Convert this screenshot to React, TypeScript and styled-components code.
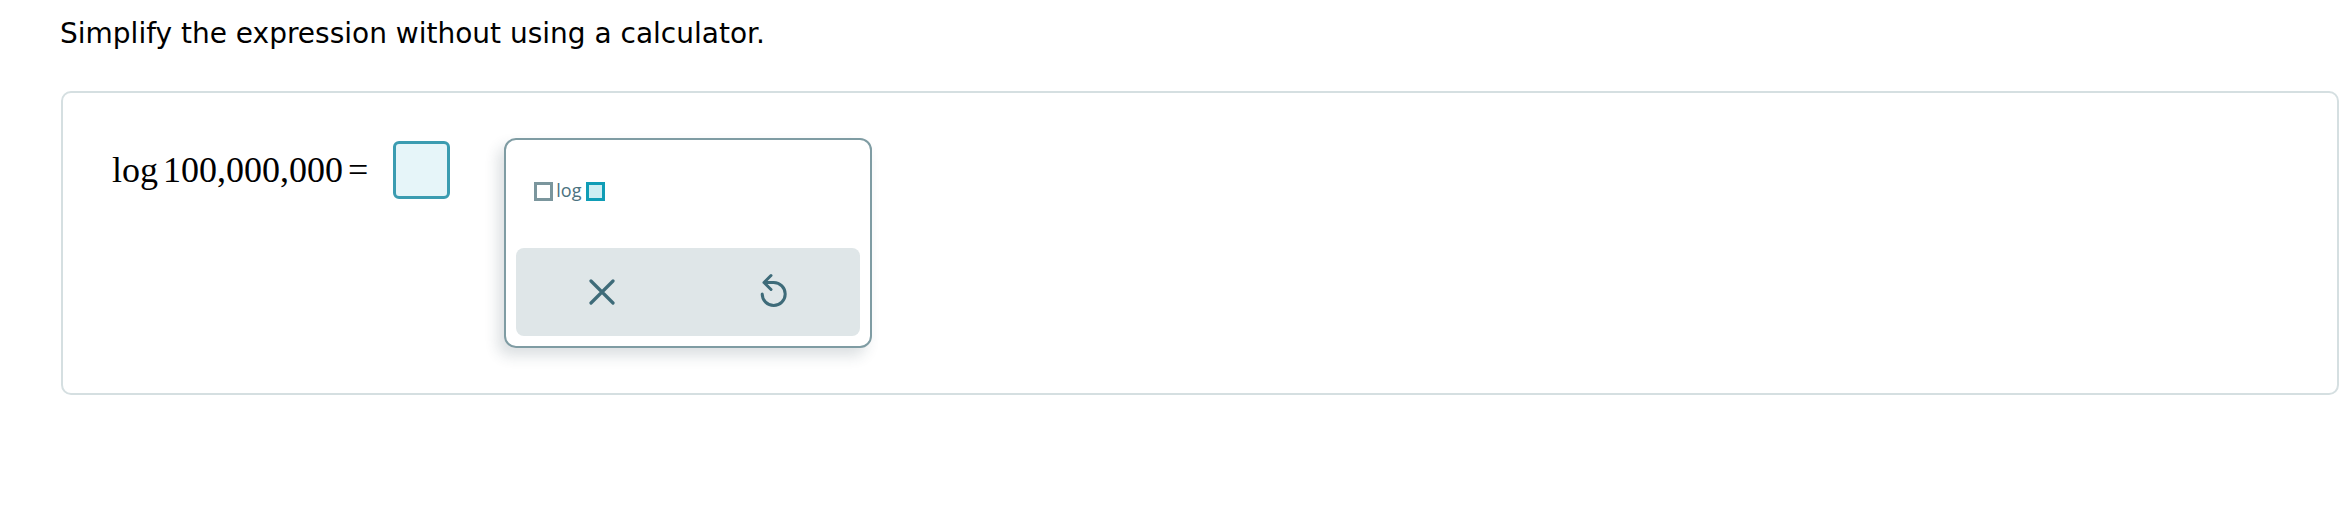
import React from 'react';
import styled, { createGlobalStyle } from 'styled-components';

const GlobalStyle = createGlobalStyle`
  html,
  body {
    margin: 0;
    padding: 0;
    background: #fff;
  }
`;

const Page = styled.div`
  padding: 0 11px 0 61px;
  box-sizing: border-box;
  width: 2350px;
`;

const Prompt = styled.p`
  margin: 16px 0 0 -1px;
  font-family: 'DejaVu Sans', Verdana, sans-serif;
  font-size: 28px;
  line-height: 36px;
  color: #000;
`;

const Card = styled.div`
  margin-top: 39px;
  height: 304px;
  box-sizing: border-box;
  border: 2px solid #d5dfe1;
  border-radius: 10px;
  padding: 45px 0 0 49px;
`;

const Row = styled.div`
  display: flex;
  align-items: flex-start;
`;

const Expression = styled.div`
  display: flex;
  align-items: center;
  margin-top: 3px;
  font-family: 'Liberation Serif', 'Times New Roman', serif;
  font-size: 36px;
  color: #000;
  white-space: nowrap;
`;

const Term = styled.span<{ $gap?: number }>`
  margin-left: ${(p) => p.$gap ?? 0}px;
  line-height: 1;
`;

const AnswerBox = styled.div`
  width: 57px;
  height: 58px;
  margin-left: 25px;
  box-sizing: border-box;
  border: 3px solid #3b9cb1;
  border-radius: 6px;
  background: #e6f5f9;
`;

const Keypad = styled.div`
  margin-left: 54px;
  width: 368px;
  height: 210px;
  box-sizing: border-box;
  border: 2px solid #7f9ca3;
  border-radius: 12px;
  padding: 10px;
  background: #fff;
  box-shadow: -6px 8px 14px rgba(40, 64, 74, 0.16);
  display: flex;
  flex-direction: column;
`;

const TemplateArea = styled.div`
  flex: 1;
  padding: 32px 0 0 18px;
`;

const TemplateButton = styled.div`
  display: inline-flex;
  align-items: center;
  height: 19px;
`;

const Slot = styled.span<{ $active?: boolean }>`
  display: block;
  width: 19px;
  height: 19px;
  box-sizing: border-box;
  border: 3px solid ${(p) => (p.$active ? '#0f9db6' : '#7b969d')};
  background: ${(p) => (p.$active ? '#cdeef3' : '#fff')};
`;

const FnLabel = styled.span`
  margin: 0 5px 0 3px;
  font-family: 'Open Sans', 'Liberation Sans', sans-serif;
  font-size: 18px;
  line-height: 19px;
  color: #4b7280;
  position: relative;
  top: -1px;
`;

const ActionBar = styled.div`
  display: grid;
  grid-template-columns: 1fr 1fr;
  height: 88px;
  border-radius: 8px;
  background: #dfe6e8;
`;

const ActionButton = styled.button`
  display: flex;
  align-items: center;
  justify-content: center;
  border: none;
  background: transparent;
  padding: 0;
  cursor: pointer;
  color: #3e6b79;
`;

const ClearIcon = () => (
  <svg width="26" height="26" viewBox="0 0 26 26" fill="none">
    <path
      d="M2 2 L24 24 M24 2 L2 24"
      stroke="currentColor"
      strokeWidth="3.2"
      strokeLinecap="round"
    />
  </svg>
);

const UndoIcon = () => (
  <svg width="30" height="36" viewBox="0 0 30 36" fill="none" style={{ marginTop: -2 }}>
    <path
      d="M12 2.5 L5 9.5 L12 16.5 M5 9.5 H14.7 A11.5 11.5 0 1 1 3.2 21"
      stroke="currentColor"
      strokeWidth="3"
      strokeLinecap="round"
      strokeLinejoin="round"
    />
  </svg>
);

export default function App() {
  return (
    <>
      <GlobalStyle />
      <Page>
        <Prompt>Simplify the expression without using a calculator.</Prompt>
        <Card>
          <Row>
            <Expression>
              <Term>log</Term>
              <Term $gap={5}>100,000,000</Term>
              <Term $gap={5}>=</Term>
              <AnswerBox />
            </Expression>
            <Keypad>
              <TemplateArea>
                <TemplateButton>
                  <Slot />
                  <FnLabel>log</FnLabel>
                  <Slot $active />
                </TemplateButton>
              </TemplateArea>
              <ActionBar>
                <ActionButton aria-label="Clear">
                  <ClearIcon />
                </ActionButton>
                <ActionButton aria-label="Undo">
                  <UndoIcon />
                </ActionButton>
              </ActionBar>
            </Keypad>
          </Row>
        </Card>
      </Page>
    </>
  );
}
